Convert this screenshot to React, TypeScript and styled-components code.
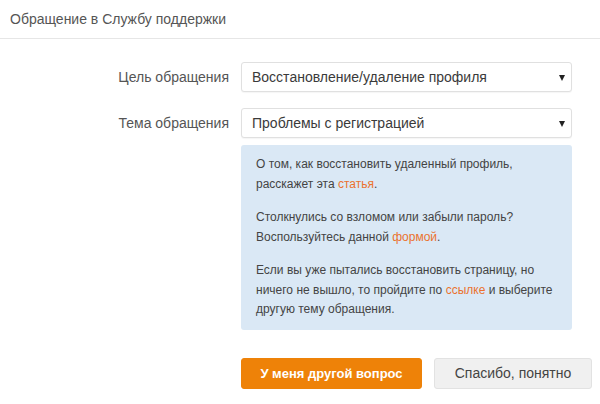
import React from 'react'
import styled, { createGlobalStyle, css } from 'styled-components'

const GlobalStyle = createGlobalStyle`
  html, body {
    margin: 0;
    padding: 0;
    background: #ffffff;
    font-family: "Liberation Sans", Arial, sans-serif;
  }
`

const Dialog = styled.div`
  width: 600px;
  height: 404px;
  background: #ffffff;
  box-sizing: border-box;
`

const Header = styled.div`
  height: 37px;
  border-bottom: 1px solid #e6e6e6;
  padding: 0 10px 1px;
  display: flex;
  align-items: center;
  font-size: 14px;
  color: #555555;
`

const Form = styled.div`
  display: grid;
  grid-template-columns: 229px 331px;
  column-gap: 12px;
  padding-top: 23px;
`

const Label = styled.div`
  text-align: right;
  font-size: 14px;
  color: #555555;
  height: 30px;
  line-height: 30px;
`

interface CellProps {
  gap?: number
}

const Cell = styled.div<CellProps>`
  margin-bottom: ${props => props.gap ?? 0}px;
`

const Select = styled.div`
  position: relative;
  height: 30px;
  box-sizing: border-box;
  border: 1px solid #e0e0e0;
  border-radius: 3px;
  background: #ffffff;
  box-shadow: 0 1px 1px rgba(0, 0, 0, 0.04);
  padding: 0 28px 0 10px;
  display: flex;
  align-items: center;
  font-size: 14px;
  color: #3a3a3a;
`

const Arrow = styled.span`
  position: absolute;
  right: 6px;
  top: 50%;
  margin-top: -2px;
  width: 0;
  height: 0;
  border-left: 3.5px solid transparent;
  border-right: 3.5px solid transparent;
  border-top: 6px solid #222222;
`

const InfoBox = styled.div`
  background: #dae8f5;
  border-radius: 3px;
  padding: 10px 15px 10px;
  font-size: 12px;
  line-height: 19.5px;
  color: #444444;
`

const Para = styled.p`
  margin: 0 0 14px;
  &:last-child {
    margin-bottom: 0;
  }
`

const Link = styled.a`
  color: #eb722e;
  text-decoration: none;
`

const Buttons = styled.div`
  display: flex;
  gap: 12px;
  margin-top: 28px;
`

interface ButtonProps {
  primary?: boolean
}

const Button = styled.button<ButtonProps>`
  flex-shrink: 0;
  height: 31px;
  box-sizing: border-box;
  border-radius: 3px;
  font-family: "Liberation Sans", Arial, sans-serif;
  padding: 0;
  cursor: pointer;
  ${props => props.primary ? css`
    width: 181px;
    background: #ee8208;
    border: 1px solid #ee8208;
    color: #ffffff;
    font-size: 13px;
    font-weight: bold;
  ` : css`
    width: 158px;
    background: #f0f0f0;
    border: 1px solid #e2e2e2;
    color: #444444;
    font-size: 14px;
  `}
`

const App = (): React.ReactElement => {
  return (
    <>
      <GlobalStyle />
      <Dialog>
        <Header>Обращение в Службу поддержки</Header>
        <Form>
          <Label>Цель обращения</Label>
          <Cell gap={16}>
            <Select>
              Восстановление/удаление профиля
              <Arrow />
            </Select>
          </Cell>
          <Label>Тема обращения</Label>
          <Cell gap={7}>
            <Select>
              Проблемы с регистрацией
              <Arrow />
            </Select>
          </Cell>
          <div />
          <Cell>
            <InfoBox>
              <Para>
                О том, как восстановить удаленный профиль,<br />
                расскажет эта <Link href="#">статья</Link>.
              </Para>
              <Para>
                Столкнулись со взломом или забыли пароль?<br />
                Воспользуйтесь данной <Link href="#">формой</Link>.
              </Para>
              <Para>
                Если вы уже пытались восстановить страницу, но<br />
                ничего не вышло, то пройдите по <Link href="#">ссылке</Link> и выберите<br />
                другую тему обращения.
              </Para>
            </InfoBox>
            <Buttons>
              <Button primary>У меня другой вопрос</Button>
              <Button>Спасибо, понятно</Button>
            </Buttons>
          </Cell>
        </Form>
      </Dialog>
    </>
  )
}

export default App
